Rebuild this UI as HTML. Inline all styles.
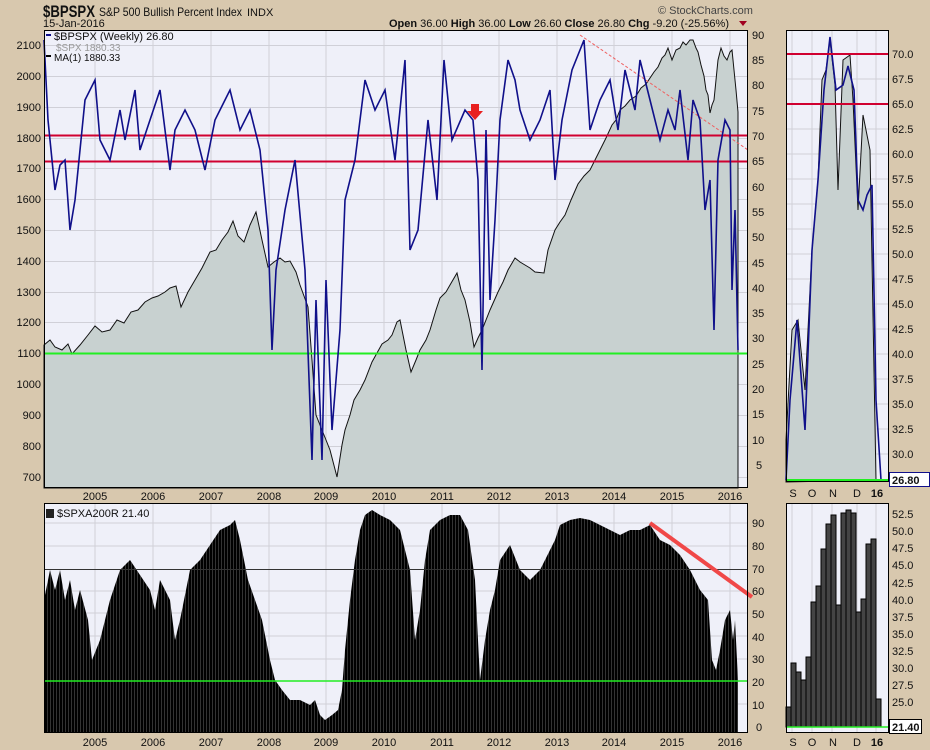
<!DOCTYPE html>
<html><head><meta charset="utf-8"><style>
body{margin:0;width:930px;height:750px;background:#d8c8ae;font-family:"Liberation Sans",sans-serif;overflow:hidden}
svg{display:block}
text{font-family:"Liberation Sans",sans-serif;font-size:11px;fill:#111}
</style></head><body>
<svg width="930" height="750" viewBox="0 0 930 750">
<defs>
<pattern id="bars" width="3" height="10" patternUnits="userSpaceOnUse"><rect width="3" height="10" fill="#000"/><rect x="2.4" width="0.6" height="10" fill="#555"/></pattern>
</defs>
<rect width="930" height="750" fill="#d8c8ae"/>
<text x="43" y="17" style="font-size:17px;font-weight:bold" textLength="52" lengthAdjust="spacingAndGlyphs">$BPSPX</text>
<text x="99" y="16" style="font-size:12px" textLength="143" lengthAdjust="spacingAndGlyphs">S&amp;P 500 Bullish Percent Index</text>
<text x="247" y="16" style="font-size:11px">INDX</text>
<text x="43" y="27" style="font-size:11px">15-Jan-2016</text>
<text x="658" y="14" style="font-size:11px;fill:#444">© StockCharts.com</text>
<text x="389" y="27" style="font-size:11px"><tspan font-weight="bold">Open</tspan> 36.00  <tspan font-weight="bold">High</tspan> 36.00  <tspan font-weight="bold">Low</tspan> 26.60  <tspan font-weight="bold">Close</tspan> 26.80  <tspan font-weight="bold">Chg</tspan> -9.20 (-25.56%)</text>
<path d="M739 21 l8 0 l-4 5z" fill="#a00020"/>

<rect x="44" y="30" width="704" height="458" fill="#eff0f9"/>
<g stroke="#d0d0d8" stroke-width="1">
<path d="M95 30V488M153 30V488M211 30V488M269 30V488M326 30V488M384 30V488M442 30V488M499 30V488M557 30V488M614 30V488M672 30V488M730 30V488"/>
<path d="M44 45.5H748M44 76.5H748M44 107.5H748M44 138.5H748M44 168.5H748M44 199.5H748M44 230.5H748M44 261.5H748M44 292.5H748M44 322.5H748M44 353.5H748M44 384.5H748M44 415.5H748M44 446.5H748M44 477.5H748"/>
</g>
<path d="M44 488 L44 345 L50 340 L55 347 L62 350 L68 344 L72 354 L80 345 L88 335 L95 326 L102 332 L110 330 L117 320 L124 323 L131 312 L138 310 L145 302 L152 298 L158 296 L165 292 L170 288 L176 286 L181 307 L188 292 L195 280 L202 268 L210 252 L216 250 L222 240 L228 232 L233 221 L238 236 L244 242 L250 225 L256 212 L262 240 L268 267 L274 262 L280 258 L285 262 L290 261 L296 272 L300 285 L308 307 L312 360 L316 415 L322 430 L330 450 L337 477 L342 445 L345 430 L350 415 L354 400 L360 390 L365 380 L372 362 L382 344 L388 340 L392 335 L397 322 L400 320 L403 335 L406 350 L411 372 L416 360 L420 350 L426 340 L430 330 L436 310 L440 298 L446 292 L450 285 L457 273 L461 290 L465 300 L470 322 L474 347 L478 338 L482 330 L490 310 L498 292 L503 282 L508 270 L515 258 L520 262 L525 265 L530 268 L535 272 L544 273 L548 250 L555 230 L560 222 L565 215 L571 200 L578 184 L584 176 L590 170 L595 160 L600 150 L606 138 L612 125 L616 120 L620 110 L625 106 L630 100 L636 96 L641 88 L646 84 L650 78 L654 72 L658 67 L662 58 L665 55 L668 48 L672 60 L676 50 L680 48 L683 42 L686 45 L690 40 L693 40 L696 48 L698 52 L701 65 L704 76 L706 90 L708 95 L710 113 L712 105 L714 100 L716 80 L718 60 L721 48 L724 56 L727 60 L730 52 L732 50 L734 70 L736 90 L738 112 L738 488 Z" fill="#c8d1d0" stroke="#111" stroke-width="1"/>
<path d="M580 35 L748 150" stroke="#f06060" stroke-width="1" stroke-dasharray="3,2"/>
<path d="M44 135.5H748M44 161.5H748" stroke="#d00030" stroke-width="2"/>
<path d="M44 353.5H748" stroke="#22ee22" stroke-width="2"/>
<polyline fill="none" stroke="#10108a" stroke-width="1.6" points="44,40 48,120 55,190 60,165 65,160 70,230 75,200 85,100 95,80 100,140 110,160 120,110 125,140 135,90 140,150 150,120 160,90 170,170 175,130 185,110 195,130 205,170 215,120 225,100 230,90 240,130 250,110 260,150 268,230 272,350 276,270 285,210 295,160 305,270 312,460 316,300 322,460 326,280 332,430 340,330 345,200 355,160 365,80 375,110 385,90 395,160 405,60 410,250 418,230 428,120 437,200 444,60 452,140 465,110 473,120 478,180 482,370 486,130 490,300 495,220 500,120 508,60 515,80 520,110 530,140 540,120 550,90 555,180 562,120 572,70 580,50 584,40 590,130 600,100 610,80 618,130 625,70 635,110 640,60 650,100 660,140 668,110 675,130 680,90 688,160 693,100 700,120 705,210 710,180 714,330 718,160 725,120 730,130 732,290 735,210 738,350"/>
<path d="M471 104h8v7h4l-8 9l-8-9h4z" fill="#e82020"/>
<rect x="44.5" y="30.5" width="703" height="457" fill="none" stroke="#000"/>
<rect x="46" y="34" width="5" height="2" fill="#10108a"/>
<text x="54" y="40" style="font-size:11px">$BPSPX (Weekly) 26.80</text>
<text x="56" y="51" style="font-size:10px;fill:#999">$SPX 1880.33</text>
<rect x="46" y="55" width="5" height="2" fill="#000"/>
<text x="54" y="61" style="font-size:10px">MA(1) 1880.33</text>
<g style="font-size:10px" text-anchor="end">
<text x="41" y="49">2100</text><text x="41" y="80">2000</text><text x="41" y="111">1900</text><text x="41" y="142">1800</text><text x="41" y="172">1700</text><text x="41" y="203">1600</text><text x="41" y="234">1500</text><text x="41" y="265">1400</text><text x="41" y="296">1300</text><text x="41" y="326">1200</text><text x="41" y="357">1100</text><text x="41" y="388">1000</text><text x="41" y="419">900</text><text x="41" y="450">800</text><text x="41" y="481">700</text>
</g>
<g style="font-size:10px">
<text x="752" y="39">90</text><text x="752" y="64">85</text><text x="752" y="89">80</text><text x="752" y="115">75</text><text x="752" y="140">70</text><text x="752" y="165">65</text><text x="752" y="191">60</text><text x="752" y="216">55</text><text x="752" y="241">50</text><text x="752" y="267">45</text><text x="752" y="292">40</text><text x="752" y="317">35</text><text x="752" y="342">30</text><text x="752" y="368">25</text><text x="752" y="393">20</text><text x="752" y="418">15</text><text x="752" y="444">10</text><text x="756" y="469">5</text>
</g>
<g style="font-size:11px" text-anchor="middle">
<text x="95" y="500">2005</text><text x="153" y="500">2006</text><text x="211" y="500">2007</text><text x="269" y="500">2008</text><text x="326" y="500">2009</text><text x="384" y="500">2010</text><text x="442" y="500">2011</text><text x="499" y="500">2012</text><text x="557" y="500">2013</text><text x="614" y="500">2014</text><text x="672" y="500">2015</text><text x="730" y="500">2016</text>
</g>

<rect x="786" y="30" width="103" height="452" fill="#eff0f9"/>
<g stroke="#d0d0d8"><path d="M792 30V482M812 30V482M832 30V482M857 30V482M876 30V482M786 79H889M786 129H889M786 154H889M786 179H889M786 204H889M786 229H889M786 254H889M786 279H889M786 304H889M786 329H889M786 354H889M786 379H889M786 404H889M786 429H889M786 454H889"/></g>
<path d="M786 482 L786 440 L792 330 L798 320 L805 390 L812 250 L818 180 L822 80 L826 70 L830 40 L835 85 L838 190 L843 60 L850 55 L853 100 L858 210 L863 115 L870 150 L876 480 Z" fill="#c8d1d0" stroke="#111"/>
<polyline fill="none" stroke="#10108a" stroke-width="1.6" points="786,480 790,400 797,320 805,430 812,250 818,180 824,90 830,37 836,90 843,85 848,66 854,90 858,200 863,210 867,195 872,185 876,400 881,480"/>
<path d="M786 54H889M786 104H889" stroke="#d00030" stroke-width="2"/>
<path d="M786 480H889" stroke="#22ee22" stroke-width="2"/>
<rect x="786.5" y="30.5" width="102" height="451" fill="none" stroke="#000"/>
<g style="font-size:10px">
<text x="892" y="58">70.0</text><text x="892" y="83">67.5</text><text x="892" y="108">65.0</text><text x="892" y="133">62.5</text><text x="892" y="158">60.0</text><text x="892" y="183">57.5</text><text x="892" y="208">55.0</text><text x="892" y="233">52.5</text><text x="892" y="258">50.0</text><text x="892" y="283">47.5</text><text x="892" y="308">45.0</text><text x="892" y="333">42.5</text><text x="892" y="358">40.0</text><text x="892" y="383">37.5</text><text x="892" y="408">35.0</text><text x="892" y="433">32.5</text><text x="892" y="458">30.0</text>
</g>
<rect x="889.5" y="472.5" width="40" height="14" fill="#fff" stroke="#10108a"/>
<text x="892" y="484" style="font-size:11px;font-weight:bold">26.80</text>
<g style="font-size:11px" text-anchor="middle"><text x="793" y="497">S</text><text x="812" y="497">O</text><text x="833" y="497">N</text><text x="857" y="497">D</text><text x="877" y="497" font-weight="bold">16</text></g>

<rect x="44" y="503" width="704" height="230" fill="#eff0f9"/>
<g stroke="#d0d0d8"><path d="M95 503V733M153 503V733M211 503V733M269 503V733M326 503V733M384 503V733M442 503V733M499 503V733M557 503V733M614 503V733M672 503V733M730 503V733M44 523H748M44 546H748M44 591H748M44 613H748M44 636H748M44 659H748M44 704H748"/></g>
<path d="M44 733 L44 600 L50 570 L55 590 L60 570 L65 600 L70 580 L75 610 L80 590 L88 620 L92 660 L100 640 L110 600 L120 570 L130 560 L140 575 L150 590 L155 610 L160 580 L170 600 L175 640 L180 620 L190 570 L200 560 L210 545 L220 530 L230 525 L235 520 L240 540 L248 580 L255 600 L262 620 L270 660 L275 680 L282 690 L290 700 L300 700 L310 705 L315 700 L320 715 L325 720 L332 715 L338 710 L342 690 L345 650 L350 600 L355 560 L360 530 L365 515 L372 510 L380 515 L390 520 L400 530 L410 570 L415 640 L420 610 L425 560 L430 530 L440 520 L450 515 L460 515 L468 530 L475 580 L480 680 L485 640 L490 610 L495 590 L500 560 L510 545 L520 570 L530 580 L540 570 L550 550 L555 540 L560 525 L570 520 L580 518 L590 520 L600 525 L610 530 L620 535 L630 530 L640 530 L650 525 L660 540 L670 545 L680 555 L690 570 L700 590 L708 600 L712 660 L716 670 L720 650 L725 620 L730 610 L733 640 L735 620 L738 680 L738 733 Z" fill="url(#bars)"/>
<path d="M44 569.5H748" stroke="#333"/>
<path d="M44 681H748" stroke="#22ee22" stroke-width="1.5"/>
<path d="M650 523 L752 597" stroke="#f04848" stroke-width="4"/>
<rect x="44.5" y="503.5" width="703" height="229" fill="none" stroke="#000"/>
<rect x="46" y="509" width="8" height="9" fill="#222"/>
<text x="57" y="517" style="font-size:11px">$SPXA200R 21.40</text>
<g style="font-size:10px"><text x="752" y="527">90</text><text x="752" y="550">80</text><text x="752" y="573">70</text><text x="752" y="595">60</text><text x="752" y="618">50</text><text x="752" y="641">40</text><text x="752" y="663">30</text><text x="752" y="686">20</text><text x="752" y="709">10</text><text x="756" y="731">0</text></g>
<g style="font-size:11px" text-anchor="middle">
<text x="95" y="746">2005</text><text x="153" y="746">2006</text><text x="211" y="746">2007</text><text x="269" y="746">2008</text><text x="326" y="746">2009</text><text x="384" y="746">2010</text><text x="442" y="746">2011</text><text x="499" y="746">2012</text><text x="557" y="746">2013</text><text x="614" y="746">2014</text><text x="672" y="746">2015</text><text x="730" y="746">2016</text>
</g>

<rect x="786" y="503" width="103" height="230" fill="#eff0f9"/>
<g stroke="#d0d0d8"><path d="M792 503V733M812 503V733M832 503V733M857 503V733M876 503V733"/></g>
<g fill="#444" stroke="#000" stroke-width="1">
<rect x="786" y="707" width="5" height="20"/><rect x="791" y="663" width="5" height="64"/><rect x="796" y="672" width="5" height="55"/><rect x="801" y="680" width="5" height="47"/><rect x="806" y="657" width="5" height="70"/><rect x="811" y="602" width="5" height="125"/><rect x="816" y="586" width="5" height="141"/><rect x="821" y="549" width="5" height="178"/><rect x="826" y="524" width="5" height="203"/><rect x="831" y="515" width="5" height="212"/><rect x="836" y="605" width="5" height="122"/><rect x="841" y="513" width="5" height="214"/><rect x="846" y="510" width="5" height="217"/><rect x="851" y="513" width="5" height="214"/><rect x="856" y="612" width="5" height="115"/><rect x="861" y="599" width="5" height="128"/><rect x="866" y="544" width="5" height="183"/><rect x="871" y="539" width="5" height="188"/><rect x="876" y="699" width="5" height="28"/>
</g>
<path d="M786 727H889" stroke="#22ee22" stroke-width="1.5"/>
<rect x="786.5" y="503.5" width="102" height="229" fill="none" stroke="#000"/>
<g style="font-size:10px"><text x="892" y="518">52.5</text><text x="892" y="535">50.0</text><text x="892" y="552">47.5</text><text x="892" y="569">45.0</text><text x="892" y="587">42.5</text><text x="892" y="604">40.0</text><text x="892" y="621">37.5</text><text x="892" y="638">35.0</text><text x="892" y="655">32.5</text><text x="892" y="672">30.0</text><text x="892" y="689">27.5</text><text x="892" y="706">25.0</text></g>
<rect x="889.5" y="719.5" width="32" height="14" fill="#fff" stroke="#000"/>
<text x="892" y="731" style="font-size:11px;font-weight:bold">21.40</text>
<g style="font-size:11px" text-anchor="middle"><text x="793" y="746">S</text><text x="812" y="746">O</text><text x="833" y="746">N</text><text x="857" y="746">D</text><text x="877" y="746" font-weight="bold">16</text></g>
</svg>
</body></html>
